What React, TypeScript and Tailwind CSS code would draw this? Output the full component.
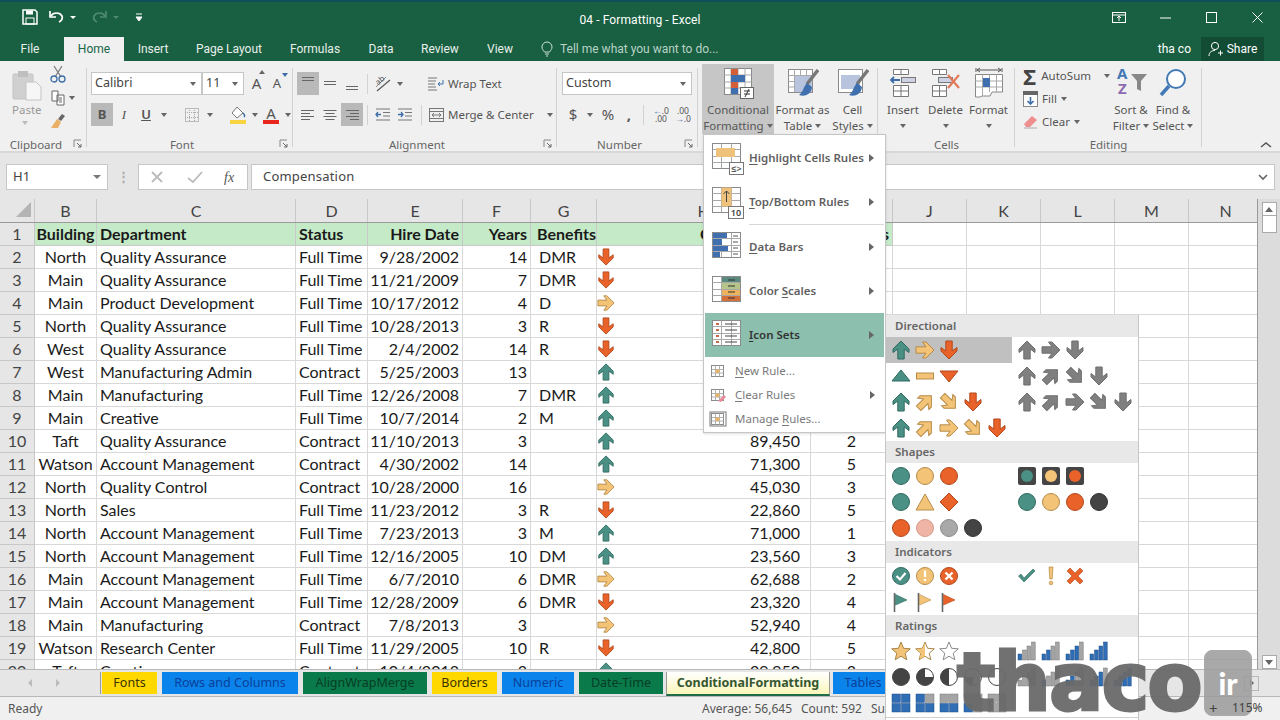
import { ReactNode } from 'react'

const TEAL = ['#4b9085', '#2f6a60']
const AMBER = ['#f3c477', '#b68b4a']
const ORANGE = ['#e8622a', '#b2481c']
const GRAY = ['#808080', '#6f6f6f']

const Arrow = ({ dir, c, size = 20 }: { dir: number; c: string[]; size?: number }) => (
  <svg width={size} height={size} viewBox="0 0 20 20">
    <path
      transform={`rotate(${dir} 10 10)`}
      d="M10 1 L18 9 L18 12.5 L13.2 9 L13.2 19 L6.8 19 L6.8 9 L2 12.5 L2 9Z"
      fill={c[0]}
      stroke={c[1]}
      strokeWidth="1"
    />
  </svg>
)

const Shape = ({ children }: { children: ReactNode }) => (
  <svg width="20" height="20" viewBox="0 0 20 20">
    {children}
  </svg>
)

const Dot = ({ c }: { c: string[] }) => (
  <Shape>
    <circle cx="10" cy="10" r="8.5" fill={c[0]} stroke={c[1]} />
  </Shape>
)

const Traffic = ({ c }: { c: string[] }) => (
  <Shape>
    <rect x="1" y="1" width="18" height="18" rx="2" fill="#454545" />
    <circle cx="10" cy="10" r="6" fill={c[0]} />
  </Shape>
)

const Flag = ({ c }: { c: string[] }) => (
  <Shape>
    <path d="M3.5 1V20" stroke="#666" strokeWidth="1.6" />
    <path d="M4.5 2.5L16 8L4.5 13Z" fill={c[0]} stroke={c[1]} strokeWidth="0.6" />
  </Shape>
)

const Star = ({ fill }: { fill: 'full' | 'half' | 'none' }) => (
  <Shape>
    <path
      d="M10 1L12.6 7.3L19.3 7.8L14.2 12.2L15.8 18.8L10 15.2L4.2 18.8L5.8 12.2L0.7 7.8L7.4 7.3Z"
      fill={fill === 'full' ? '#f3c477' : '#fff'}
      stroke={fill === 'none' ? '#8a8a8a' : '#a88547'}
    />
    {fill === 'half' && <path d="M10 1.8V15.2L4.5 18.3L6 12.2L1.3 7.9L7.6 7.5Z" fill="#f3c477" />}
  </Shape>
)

const Bars = ({ on }: { on: number }) => (
  <Shape>
    {[0, 1, 2, 3].map((i) => (
      <rect
        key={i}
        x={1 + i * 4.5}
        y={13 - i * 4}
        width="3.7"
        height={6 + i * 4}
        fill={i < on ? '#2f6db5' : '#a5a5a5'}
        stroke={i < on ? '#1f4f87' : '#777'}
        strokeWidth="0.5"
      />
    ))}
  </Shape>
)

const Pie = ({ d }: { d: string }) => (
  <Shape>
    <circle cx="10" cy="10" r="8.5" fill={d === 'M0' ? '#444' : '#fff'} stroke="#444" />
    {d !== 'M0' && <path d={d} fill="#444" />}
  </Shape>
)

const Quad = ({ on }: { on: boolean[] }) => (
  <Shape>
    {[
      [1, 1],
      [10.5, 1],
      [1, 10.5],
      [10.5, 10.5],
    ].map(([x, y], i) => (
      <rect key={i} x={x} y={y} width="8.5" height="8.5" fill={on[i] ? '#2f6db5' : '#a5a5a5'} stroke={on[i] ? '#1f4f87' : '#777'} strokeWidth="0.5" />
    ))}
  </Shape>
)

const IconRow = ({ items, hover }: { items: ReactNode[]; hover?: boolean }) => (
  <div className={`flex items-center pl-[3px] h-full ${hover ? 'bg-[#c0c0c0]' : ''}`}>
    {items.map((it, i) => (
      <span key={i} className="w-[24px] flex justify-center">
        {it}
      </span>
    ))}
  </div>
)

const SetRow = ({ left, right = [], hover, h = 'h-[26px]' }: { left: ReactNode[]; right?: ReactNode[]; hover?: boolean; h?: string }) => (
  <div className={`grid grid-cols-[126px_1fr] ${h}`}>
    <IconRow items={left} hover={hover} />
    <IconRow items={right} />
  </div>
)

const SetHeader = ({ label }: { label: string }) => (
  <div className="h-[22px] bg-[#e8e8e8] pl-[9px] flex items-center text-[11.5px] font-semibold text-[#666]">{label}</div>
)

const IconSetsMenu = () => (
  <div className="absolute left-[885px] top-[315px] w-[254px] h-[405px] bg-white border-l border-r border-[#c6c6c6] overflow-hidden z-20">
    <SetHeader label="Directional" />
    <SetRow
      hover
      left={[<Arrow dir={0} c={TEAL} />, <Arrow dir={90} c={AMBER} />, <Arrow dir={180} c={ORANGE} />]}
      right={[<Arrow dir={0} c={GRAY} />, <Arrow dir={90} c={GRAY} />, <Arrow dir={180} c={GRAY} />]}
    />
    <SetRow
      left={[
        <Shape><path d="M10 4L19 15H1Z" fill={TEAL[0]} stroke={TEAL[1]} /></Shape>,
        <Shape><rect x="1.5" y="7" width="17" height="6" fill={AMBER[0]} stroke={AMBER[1]} /></Shape>,
        <Shape><path d="M1 5H19L10 16Z" fill={ORANGE[0]} stroke={ORANGE[1]} /></Shape>,
      ]}
      right={[<Arrow dir={0} c={GRAY} />, <Arrow dir={45} c={GRAY} />, <Arrow dir={135} c={GRAY} />, <Arrow dir={180} c={GRAY} />]}
    />
    <SetRow
      left={[<Arrow dir={0} c={TEAL} />, <Arrow dir={45} c={AMBER} />, <Arrow dir={135} c={AMBER} />, <Arrow dir={180} c={ORANGE} />]}
      right={[<Arrow dir={0} c={GRAY} />, <Arrow dir={45} c={GRAY} />, <Arrow dir={90} c={GRAY} />, <Arrow dir={135} c={GRAY} />, <Arrow dir={180} c={GRAY} />]}
    />
    <SetRow left={[<Arrow dir={0} c={TEAL} />, <Arrow dir={45} c={AMBER} />, <Arrow dir={90} c={AMBER} />, <Arrow dir={135} c={AMBER} />, <Arrow dir={180} c={ORANGE} />]} />

    <SetHeader label="Shapes" />
    <SetRow
      left={[<Dot c={TEAL} />, <Dot c={AMBER} />, <Dot c={ORANGE} />]}
      right={[<Traffic c={TEAL} />, <Traffic c={AMBER} />, <Traffic c={ORANGE} />]}
    />
    <SetRow
      left={[
        <Dot c={TEAL} />,
        <Shape><path d="M10 2L19 18H1Z" fill={AMBER[0]} stroke={AMBER[1]} /></Shape>,
        <Shape><path d="M10 1L19 10L10 19L1 10Z" fill={ORANGE[0]} stroke={ORANGE[1]} /></Shape>,
      ]}
      right={[<Dot c={TEAL} />, <Dot c={AMBER} />, <Dot c={ORANGE} />, <Dot c={['#444', '#333']} />]}
    />
    <SetRow left={[<Dot c={ORANGE} />, <Dot c={['#efb4a4', '#d59a8a']} />, <Dot c={['#a8a8a8', '#8a8a8a']} />, <Dot c={['#444', '#333']} />]} />

    <SetHeader label="Indicators" />
    <SetRow
      left={[
        <Shape>
          <circle cx="10" cy="10" r="8.5" fill={TEAL[0]} stroke={TEAL[1]} />
          <path d="M5.5 10L9 13.5L14.5 7" stroke="#fff" strokeWidth="2.2" fill="none" />
        </Shape>,
        <Shape>
          <circle cx="10" cy="10" r="8.5" fill={AMBER[0]} stroke={AMBER[1]} />
          <path d="M10 4.5V11M10 13V15" stroke="#fff" strokeWidth="2.2" />
        </Shape>,
        <Shape>
          <circle cx="10" cy="10" r="8.5" fill={ORANGE[0]} stroke={ORANGE[1]} />
          <path d="M6.5 6.5L13.5 13.5M13.5 6.5L6.5 13.5" stroke="#fff" strokeWidth="2.4" />
        </Shape>,
      ]}
      right={[
        <Shape><path d="M1.5 10L7 16L18 5L16 3L7 12L4 8Z" fill={TEAL[0]} stroke={TEAL[1]} strokeWidth="0.6" /></Shape>,
        <Shape><path d="M8 1H12L11.2 13H8.8Z" fill={AMBER[0]} stroke={AMBER[1]} strokeWidth="0.7" /><circle cx="10" cy="17" r="1.8" fill={AMBER[0]} stroke={AMBER[1]} strokeWidth="0.7" /></Shape>,
        <Shape><path d="M5 2L10 7L15 2L18 5L13 10L18 15L15 18L10 13L5 18L2 15L7 10L2 5Z" fill={ORANGE[0]} stroke={ORANGE[1]} strokeWidth="0.6" /></Shape>,
      ]}
    />
    <SetRow h="h-[25px]" left={[<Flag c={TEAL} />, <Flag c={AMBER} />, <Flag c={ORANGE} />]} />
    <div className="pt-[1px]">
      <SetHeader label="Ratings" />
    </div>
    <SetRow
      h="h-[26px] mt-px"
      left={[<Star fill="full" />, <Star fill="half" />, <Star fill="none" />]}
      right={[<Bars on={1} />, <Bars on={2} />, <Bars on={3} />, <Bars on={4} />]}
    />
    <SetRow
      left={[
        <Pie d="M0" />,
        <Pie d="M10 10V1.5A8.5 8.5 0 1 0 18.5 10Z" />,
        <Pie d="M10 1.5A8.5 8.5 0 0 0 10 18.5Z" />,
        <Pie d="M10 10H1.5A8.5 8.5 0 0 0 10 18.5Z" />,
        <Pie d="M10 10" />,
      ]}
      right={[<Bars on={0} />, <Bars on={1} />, <Bars on={2} />, <Bars on={3} />, <Bars on={4} />]}
    />
    <SetRow
      left={[
        <Quad on={[true, true, true, true]} />,
        <Quad on={[true, false, true, true]} />,
        <Quad on={[false, false, true, true]} />,
        <Quad on={[false, false, true, false]} />,
        <Quad on={[false, false, false, false]} />,
      ]}
    />
    <div className="border-t border-[#d0d0d0] mt-[1px]" />
  </div>
)

const MiniGrid = ({ children }: { children?: ReactNode }) => (
  <svg width="40" height="36" viewBox="0 0 40 36">
    <rect x="6.5" y="3.5" width="28" height="25" fill="#fff" stroke="#8a8a8a" />
    <path d="M15.5 3.5V28.5M25.5 3.5V28.5M6.5 9.5H34.5M6.5 16.5H34.5M6.5 22.5H34.5" stroke="#a8a8a8" />
    {children}
  </svg>
)

const SmallGrid = ({ extra }: { extra?: ReactNode }) => (
  <svg width="18" height="18" viewBox="0 0 18 18">
    <rect x="2.5" y="3.5" width="12" height="11" fill="#fff" stroke="#8a8a8a" />
    <path d="M6.5 3.5V14.5M10.5 3.5V14.5M2.5 7.5H14.5M2.5 11H14.5" stroke="#b0b0b0" />
    <rect x="6.5" y="7.5" width="4" height="3.5" fill="#e4b56b" />
    {extra}
  </svg>
)

const U = ({ children }: { children: ReactNode }) => <span className="underline underline-offset-2">{children}</span>

const MenuItem = ({ icon, children, active }: { icon: ReactNode; children: ReactNode; active?: boolean }) => (
  <div className={`h-[44px] mx-px flex items-center pl-px pr-[10px] text-[11.5px] font-semibold whitespace-nowrap ${active ? 'bg-[#8cbfae] text-[#333]' : 'text-[#5f5f5f]'}`}>
    <span className="w-[43px] shrink-0">{icon}</span>
    <span className="flex-1 pb-px">{children}</span>
    <span className="border-l-[5px] border-y-[4px] border-y-transparent border-l-[#666]" />
  </div>
)

const SmallItem = ({ icon, children, arrow }: { icon: ReactNode; children: ReactNode; arrow?: boolean }) => (
  <div className="h-[24px] flex items-center pl-[5px] pr-[10px] text-[11.5px] text-[#7a7a7a]">
    <span className="w-[26px]">{icon}</span>
    <span className="flex-1">{children}</span>
    {arrow && <span className="border-l-[5px] border-y-[4px] border-y-transparent border-l-[#666]" />}
  </div>
)

const CondMenu = () => (
  <div className="absolute left-[703px] top-[134px] w-[183px] h-[299px] bg-white border border-[#c6c6c6] shadow-sm z-10 pt-px">
    <MenuItem
      icon={
        <MiniGrid>
          <rect x="10" y="8" width="19" height="9" fill="#eec27a" />
          <rect x="23.5" y="22.5" width="14" height="12" fill="#fff" stroke="#777" />
          <text x="30.5" y="32" fontSize="9" textAnchor="middle" fill="#555">≤&gt;</text>
        </MiniGrid>
      }
    >
      <U>H</U>ighlight Cells Rules
    </MenuItem>
    <MenuItem
      icon={
        <MiniGrid>
          <rect x="15.5" y="3.5" width="10" height="19" fill="#eec27a" />
          <path d="M20.5 18V7M17.5 10L20.5 7L23.5 10" stroke="#444" fill="none" />
          <rect x="22.5" y="22.5" width="15" height="12" fill="#fff" stroke="#777" />
          <text x="30" y="32" fontSize="9" textAnchor="middle" fill="#444">10</text>
        </MiniGrid>
      }
    >
      <U>T</U>op/Bottom Rules
    </MenuItem>
    <div className="ml-[45px] border-t border-[#d8d8d8] mr-px" />
    <MenuItem
      icon={
        <MiniGrid>
          <rect x="7" y="4" width="14" height="5" fill="#3f6fae" />
          <rect x="7" y="10" width="9" height="6" fill="#3f6fae" />
          <rect x="7" y="17" width="15" height="5" fill="#3f6fae" />
          <rect x="7" y="23" width="7" height="5" fill="#3f6fae" />
          <path d="M27 7H32M27 13H32M27 19H32M27 25H32" stroke="#555" />
        </MiniGrid>
      }
    >
      <U>D</U>ata Bars
    </MenuItem>
    <MenuItem
      icon={
        <MiniGrid>
          <rect x="16" y="4" width="18" height="5" fill="#5a8a7e" />
          <rect x="16" y="10" width="18" height="6" fill="#b4c48a" />
          <rect x="16" y="17" width="18" height="5" fill="#eeb25c" />
          <rect x="16" y="23" width="18" height="5" fill="#d4703a" />
          <path d="M22 7H29M22 13H29M22 19H29M22 25H29" stroke="#333" />
        </MiniGrid>
      }
    >
      Color <U>S</U>cales
    </MenuItem>
    <MenuItem
      active
      icon={
        <MiniGrid>
          <path d="M10 7H13M10 13H13M10 19H13M10 25H13" stroke="#c8664a" strokeWidth="2" />
          <path d="M19 7H31M19 13H31M19 19H31M19 25H31" stroke="#444" />
        </MiniGrid>
      }
    >
      <U>I</U>con Sets
    </MenuItem>
    <div className="pt-[2px]">
      <SmallItem icon={<SmallGrid />}>
        <U>N</U>ew Rule...
      </SmallItem>
      <SmallItem arrow icon={<SmallGrid extra={<path d="M9 15L15 9L17 11L12 16Z" fill="#e88a9a" />} />}>
        <U>C</U>lear Rules
      </SmallItem>
      <SmallItem icon={<SmallGrid extra={<rect x="1" y="2" width="16" height="14" fill="none" stroke="#777" />} />}>
        Manage <U>R</U>ules...
      </SmallItem>
    </div>
  </div>
)

const WIDTHS = ['w-[62px]', 'w-[199px]', 'w-[72px]', 'w-[95px]', 'w-[68px]', 'w-[66px]', 'w-[214px]', 'w-[82px]', 'w-[74px]', 'w-[74px]', 'w-[74px]', 'w-[74px]', 'w-[74px]']
const LETTERS = ['B', 'C', 'D', 'E', 'F', 'G', 'H', 'I', 'J', 'K', 'L', 'M', 'N']
const ALIGN = ['justify-center', 'pl-[3px]', 'pl-[3px]', 'justify-end pr-[3px]', 'justify-end pr-[3px]', 'pl-[8px]', 'justify-end pr-[10px]', 'justify-center', '', '', '', '', '']
const HEAD_ALIGN = ['justify-center', 'pl-[3px]', 'pl-[3px]', 'justify-end pr-[3px]', 'justify-end pr-[3px]', 'pl-[6px]', 'pl-[103px]', 'justify-end pr-[3px]']

type Flow = 'up' | 'down' | 'right'
const ROWS: [string, string, string, string, string, string, Flow, string, string][] = [
  ['North', 'Quality Assurance', 'Full Time', '9/28/2002', '14', 'DMR', 'down', '', ''],
  ['Main', 'Quality Assurance', 'Full Time', '11/21/2009', '7', 'DMR', 'down', '', ''],
  ['Main', 'Product Development', 'Full Time', '10/17/2012', '4', 'D', 'right', '', ''],
  ['North', 'Quality Assurance', 'Full Time', '10/28/2013', '3', 'R', 'down', '', ''],
  ['West', 'Quality Assurance', 'Full Time', '2/4/2002', '14', 'R', 'down', '', ''],
  ['West', 'Manufacturing Admin', 'Contract', '5/25/2003', '13', '', 'up', '', ''],
  ['Main', 'Manufacturing', 'Full Time', '12/26/2008', '7', 'DMR', 'up', '', ''],
  ['Main', 'Creative', 'Full Time', '10/7/2014', '2', 'M', 'up', '', ''],
  ['Taft', 'Quality Assurance', 'Contract', '11/10/2013', '3', '', 'up', '89,450', '2'],
  ['Watson', 'Account Management', 'Contract', '4/30/2002', '14', '', 'up', '71,300', '5'],
  ['North', 'Quality Control', 'Contract', '10/28/2000', '16', '', 'right', '45,030', '3'],
  ['North', 'Sales', 'Full Time', '11/23/2012', '3', 'R', 'down', '22,860', '5'],
  ['North', 'Account Management', 'Full Time', '7/23/2013', '3', 'M', 'up', '71,000', '1'],
  ['North', 'Account Management', 'Full Time', '12/16/2005', '10', 'DM', 'up', '23,560', '3'],
  ['Main', 'Account Management', 'Full Time', '6/7/2010', '6', 'DMR', 'right', '62,688', '2'],
  ['Main', 'Account Management', 'Full Time', '12/28/2009', '6', 'DMR', 'down', '23,320', '4'],
  ['Main', 'Manufacturing', 'Contract', '7/8/2013', '3', '', 'right', '52,940', '4'],
  ['Watson', 'Research Center', 'Full Time', '11/29/2005', '10', 'R', 'down', '42,800', '5'],
  ['Taft', 'Creative', 'Contract', '10/4/2013', '3', '', 'up', '29,950', '3'],
]

const FlowIcon = ({ f }: { f: Flow }) => (
  <span className="absolute left-0 top-[2px]">
    {f === 'up' && <Arrow dir={0} c={TEAL} size={18} />}
    {f === 'down' && <Arrow dir={180} c={ORANGE} size={18} />}
    {f === 'right' && <Arrow dir={90} c={AMBER} size={18} />}
  </span>
)

const RowHead = ({ n }: { n: number }) => (
  <div className="w-[35px] shrink-0 bg-[#e6e6e6] border-r border-b border-[#c8c8c8] flex items-center justify-center text-[#444]">{n}</div>
)

const Sheet = () => (
  <div className="flex h-[470px] shrink-0">
    <div className="w-[1258px] overflow-hidden border-r border-[#9a9a9a] font-['Lato',sans-serif] text-[16px] text-[#1a1a1a] bg-white">
      <div className="flex h-[24px] bg-[#e6e6e6] border-b border-[#9a9a9a] text-[#444] w-[1300px]">
        <div className="w-[35px] shrink-0 border-r border-[#c8c8c8] pl-[16px] pt-[3px]">
          <div className="w-0 h-0 border-l-[15px] border-b-[15px] border-l-transparent border-b-[#b4b4b4]" />
        </div>
        {LETTERS.map((l, i) => (
          <div key={l} className={`${WIDTHS[i]} shrink-0 border-r border-[#c8c8c8] flex items-center justify-center`}>
            {l}
          </div>
        ))}
      </div>
      <div className="flex h-[23px] w-[1300px]">
        <RowHead n={1} />
        {['Building', 'Department', 'Status', 'Hire Date', 'Years', 'Benefits', 'Compensation', 'Ratings'].map((t, i) => (
          <div key={t} className={`${WIDTHS[i]} shrink-0 flex items-center font-bold bg-[#c5eac8] border-b border-r border-[#c8c8c8] whitespace-nowrap ${HEAD_ALIGN[i]}`}>
            {t}
          </div>
        ))}
        {WIDTHS.slice(8).map((w, i) => (
          <div key={i} className={`${w} shrink-0 border-b border-r border-[#d8d8d8]`} />
        ))}
      </div>
      {ROWS.map((r, idx) => (
        <div key={idx} className="flex h-[23px] w-[1300px]">
          <RowHead n={idx + 2} />
          {WIDTHS.map((w, i) => {
            const text = i < 6 ? r[i] : i === 6 ? r[7] : i === 7 ? r[8] : ''
            return (
              <div key={i} className={`${w} shrink-0 relative flex items-center border-b border-r border-[#d8d8d8] ${ALIGN[i]}`}>
                {i === 6 && <FlowIcon f={r[6]} />}
                {text}
              </div>
            )
          })}
        </div>
      ))}
    </div>
    <div className="w-[22px] bg-[#dcdcdc] flex flex-col items-center pt-[3px] pb-0">
      <div className="w-[15px] h-[14px] bg-white border border-[#aaa] flex items-center justify-center">
        <span className="border-b-[5px] border-x-[4px] border-x-transparent border-b-[#666]" />
      </div>
      <div className="w-[15px] h-[17px] bg-white border border-[#aaa] border-t-0" />
      <div className="flex-1" />
      <div className="w-[15px] h-[14px] bg-white border border-[#aaa] flex items-center justify-center">
        <span className="border-t-[5px] border-x-[4px] border-x-transparent border-t-[#666]" />
      </div>
    </div>
  </div>
)

const Tab = ({ w, bg, text, children }: { w: string; bg: string; text: string; children: ReactNode }) => (
  <div className={`${w} ${bg} ${text} h-[22px] shrink-0 flex items-center justify-center`}>{children}</div>
)

const SheetTabs = () => (
  <div className="h-[28px] shrink-0 bg-[#e6e6e6] border-t border-b border-[#b8b8b8] flex items-center text-[12.5px]">
    <div className="w-[101px] h-[22px] flex items-center border-r border-[#999] shrink-0">
      <span className="ml-[28px] border-r-[4px] border-y-[4px] border-y-transparent border-r-[#bbb]" />
      <span className="ml-[24px] border-l-[4px] border-y-[4px] border-y-transparent border-l-[#bbb]" />
    </div>
    <div className="flex gap-[5px] items-start h-full pt-[2px] pl-px">
      <Tab w="w-[55px]" bg="bg-[#ffd800]" text="text-[#3a3200]">Fonts</Tab>
      <Tab w="w-[136px]" bg="bg-[#0a84ea]" text="text-[#0b3f9a]">Rows and Columns</Tab>
      <Tab w="w-[124px]" bg="bg-[#0b7a4b]" text="text-[#053d25]">AlignWrapMerge</Tab>
      <Tab w="w-[65px]" bg="bg-[#ffd800]" text="text-[#3a3200]">Borders</Tab>
      <Tab w="w-[72px]" bg="bg-[#0a84ea]" text="text-[#0b3f9a]">Numeric</Tab>
      <Tab w="w-[84px]" bg="bg-[#0b7a4b]" text="text-[#053d25]">Date-Time</Tab>
      <div className="-mx-[2px] w-[164px] h-[24px] shrink-0 bg-gradient-to-b from-white to-[#fbf6b8] border-b-2 border-[#1e6b4a] border-x border-x-[#9a9a9a] flex items-center justify-center font-bold text-[#35572f]">
        ConditionalFormatting
      </div>
      <Tab w="w-[60px]" bg="bg-[#0a84ea]" text="text-[#0b3f9a]">Tables</Tab>
    </div>
    <div className="flex-1" />
    <div className="w-[15px] h-[15px] mr-[21px] bg-[#e6e6e6] border border-[#b8b8b8] flex items-center justify-center">
      <span className="border-l-[4px] border-y-[4px] border-y-transparent border-l-[#666]" />
    </div>
  </div>
)

const StatusBar = () => (
  <div className="h-[23px] shrink-0 bg-[#f0f0f0] flex items-center pl-[8px] text-[12px] text-[#555]">
    <span className="w-[694px]">Ready</span>
    <span className="w-[99px]">Average: 56,645</span>
    <span className="w-[70px]">Count: 592</span>
    <span>Sum:</span>
  </div>
)

const Caret = ({ className = '' }: { className?: string }) => (
  <span className={`inline-block border-t-[4px] border-x-[3px] border-x-transparent border-t-[#666] ${className}`} />
)

const Lines = ({ widths, align = 'left', top = 3 }: { widths: number[]; align?: 'left' | 'center' | 'right'; top?: number }) => (
  <svg width="16" height="16" viewBox="0 0 16 16">
    {widths.map((w, i) => {
      const x = align === 'left' ? 1 : align === 'right' ? 15 - w : 8 - w / 2
      return <rect key={i} x={x} y={top + i * 3} width={w} height="1" fill="#666" />
    })}
  </svg>
)

const Btn = ({ w, active, children }: { w: string; active?: boolean; children: ReactNode }) => (
  <div className={`${w} h-[23px] flex items-center justify-center shrink-0 ${active ? 'bg-[#b9b9b9]' : ''}`}>{children}</div>
)

const Combo = ({ w, label }: { w: string; label: string }) => (
  <div className={`${w} h-[23px] bg-white border border-[#c6c6c6] flex items-center px-[3px] text-[12.5px] text-[#444]`}>
    <span className="flex-1">{label}</span>
    <Caret className="mr-[2px]" />
  </div>
)

const Launcher = () => (
  <svg width="10" height="10" viewBox="0 0 10 10" className="shrink-0">
    <path d="M1 8V1H8" stroke="#888" fill="none" />
    <path d="M4 4L8 8M8 5V8H5" stroke="#666" fill="none" />
  </svg>
)

const Group = ({ w, label, launcher, children }: { w: string; label?: string; launcher?: boolean; children: ReactNode }) => (
  <div className={`${w} shrink-0 h-full flex flex-col relative after:absolute after:right-0 after:top-[4px] after:bottom-[4px] after:w-px after:bg-[#d2d2d2]`}>
    <div className="flex-1 min-h-0">{children}</div>
    <div className={`h-[20px] pt-[7px] flex items-center justify-center text-[11.5px] text-[#666] relative ${launcher ? 'pr-[16px]' : ''}`}>
      {label}
      {launcher && (
        <span className="absolute right-[4px] top-[8px]">
          <Launcher />
        </span>
      )}
    </div>
  </div>
)

const Big = ({ w, icon, lines, active }: { w: string; icon: ReactNode; lines: string[]; active?: boolean }) => (
  <div className={`${w} h-[70px] shrink-0 flex flex-col items-center text-[11.5px] leading-[16px] text-[#555] ${active ? 'bg-[#c6c6c6]' : ''}`}>
    <div className="h-[38px] flex items-center justify-center">{icon}</div>
    <div className="text-center whitespace-nowrap">{lines[0]}</div>
    <div className="text-center whitespace-nowrap flex items-center justify-center gap-[3px] h-[16px]">
      {lines[1]}
      <Caret />
    </div>
  </div>
)

const Ribbon = () => (
  <div className="h-[92px] shrink-0 bg-[#f0f0f0] flex pl-px pt-[3px] border-b-2 border-b-[#d8d8d8]">
    <Group w="w-[86px]" label="Clipboard" launcher>
      <div className="flex">
        <div className="w-[49px] pl-[11px] pt-[5px] flex flex-col items-start text-[11.5px] leading-[16px] text-[#999]">
          <svg width="30" height="32" viewBox="0 0 30 32">
            <rect x="1" y="5" width="20" height="25" rx="1" fill="#d0d0d0" stroke="#c4c4c4" />
            <rect x="6" y="2" width="10" height="6" fill="#bfbfbf" />
            <path d="M14 13H24L29 18V31H14Z" fill="#f6f6f6" stroke="#c4c4c4" />
          </svg>
          <span className="pt-[1px]">Paste</span>
          <Caret className="ml-[10px] mt-[3px] border-t-[#bbb]" />
        </div>
        <div className="flex flex-col pt-px gap-[7px]">
          <svg width="16" height="18" viewBox="0 0 16 18">
            <path d="M4 1L11 12M12 1L5 12" stroke="#777" strokeWidth="1.2" />
            <circle cx="4" cy="14" r="3" fill="none" stroke="#3d6ea8" strokeWidth="1.3" />
            <circle cx="12" cy="14" r="3" fill="none" stroke="#3d6ea8" strokeWidth="1.3" />
          </svg>
          <div className="flex items-center gap-[3px]">
            <svg width="16" height="16" viewBox="0 0 16 16">
              <path d="M2 1H8V11H2ZM7 5H14V15H7Z" fill="#fff" stroke="#666" />
              <path d="M9 8H12M9 10H12M9 12H12" stroke="#666" />
            </svg>
            <Caret />
          </div>
          <svg width="16" height="16" viewBox="0 0 16 16">
            <path d="M1 15L7 6L11 9L8 15Z" fill="#e9b066" />
            <path d="M8 6L12 1L15 3L11 8Z" fill="#666" />
          </svg>
        </div>
      </div>
    </Group>

    <Group w="w-[206px]" label="Font" launcher>
      <div className="pl-[4px] pt-[8px] flex flex-col gap-[8px]">
        <div className="flex items-center">
          <Combo w="w-[111px]" label="Calibri" />
          <Combo w="w-[42px]" label="11" />
          <span className="w-[22px] text-center text-[#555] text-[15px] pl-[3px] relative">A<span className="absolute right-[1px] -top-[2px] border-b-[4px] border-x-[3px] border-x-transparent border-b-[#666]" /></span>
          <span className="w-[22px] text-center text-[#555] text-[13px] relative">A<span className="absolute right-0 -top-[1px] border-t-[4px] border-x-[3px] border-x-transparent border-t-[#3d6ea8]" /></span>
        </div>
        <div className="flex items-center text-[#555] text-[13px]">
          <Btn w="w-[22px]" active><b>B</b></Btn>
          <Btn w="w-[22px]"><i className="font-['Liberation_Serif',serif]">I</i></Btn>
          <Btn w="w-[22px]"><u className="font-semibold">U</u></Btn>
          <Btn w="w-[14px]"><Caret /></Btn>
          <div className="w-px h-[20px] bg-[#d2d2d2] mx-[5px]" />
          <Btn w="w-[22px]">
            <svg width="14" height="14" viewBox="0 0 14 14">
              <rect x="0.5" y="0.5" width="13" height="13" fill="none" stroke="#888" strokeDasharray="1 1" />
              <path d="M0 4.5H14M0 9.5H14M4.5 0V14M9.5 0V14" stroke="#aaa" strokeDasharray="1 1" />
            </svg>
          </Btn>
          <Btn w="w-[14px]"><Caret /></Btn>
          <div className="w-px h-[20px] bg-[#d2d2d2] mx-[5px]" />
          <Btn w="w-[22px]">
            <svg width="18" height="18" viewBox="0 0 18 18">
              <path d="M8 1L14 7L8 12L3 7Z" fill="#fff" stroke="#777" />
              <path d="M14 7C16 9 16 10 15 11" stroke="#3d6ea8" strokeWidth="1.5" fill="none" />
              <rect x="1" y="14" width="16" height="4" fill="#f7d440" />
            </svg>
          </Btn>
          <Btn w="w-[12px]"><Caret /></Btn>
          <Btn w="w-[20px]">
            <span className="relative text-[15px] text-[#555] leading-none pb-[3px]">
              A
              <span className="absolute -left-[3px] -right-[3px] bottom-0 h-[4px] bg-[#e8261c]" />
            </span>
          </Btn>
          <Btn w="w-[14px]"><Caret /></Btn>
        </div>
      </div>
    </Group>

    <Group w="w-[264px]" label="Alignment" launcher>
      <div className="pl-[4px] pt-[8px] flex flex-col gap-[8px]">
        <div className="flex items-center h-[23px]">
          <Btn w="w-[22px]" active><Lines widths={[12, 12]} align="center" top={1} /></Btn>
          <Btn w="w-[22px]"><Lines widths={[12, 12]} align="center" top={5} /></Btn>
          <Btn w="w-[22px]"><Lines widths={[12, 12]} align="center" top={10} /></Btn>
          <div className="w-px h-[20px] bg-[#d2d2d2] mx-[4px]" />
          <Btn w="w-[22px]">
            <svg width="18" height="18" viewBox="0 0 18 18">
              <path d="M2 12L12 2" stroke="#888" />
              <path d="M3 16L16 5" stroke="#555" strokeWidth="1.2" />
              <text x="2" y="9" fontSize="8" fill="#555" transform="rotate(-40 5 7)">ab</text>
            </svg>
          </Btn>
          <Btn w="w-[12px]"><Caret /></Btn>
          <div className="w-[21px]" />
          <div className="flex items-center gap-[4px] text-[11.5px] text-[#555]">
            <svg width="17" height="16" viewBox="0 0 17 16">
              <path d="M1 2H10M1 5H9M1 8H8M1 11H9M1 14H10" stroke="#777" />
              <path d="M16 4V8H11M13 6L11 8L13 10" stroke="#3d6ea8" fill="none" />
            </svg>
            Wrap Text
          </div>
        </div>
        <div className="flex items-center h-[23px]">
          <Btn w="w-[22px]"><Lines widths={[13, 9, 13, 9]} /></Btn>
          <Btn w="w-[22px]"><Lines widths={[13, 9, 13, 9]} align="center" /></Btn>
          <Btn w="w-[22px]" active><Lines widths={[13, 9, 13, 9]} align="right" /></Btn>
          <div className="w-px h-[20px] bg-[#d2d2d2] mx-[4px]" />
          <Btn w="w-[22px]">
            <svg width="16" height="14" viewBox="0 0 16 14">
              <path d="M1 1H15M8 4.5H15M8 8H15M1 12H15" stroke="#777" />
              <path d="M6 6.5H1M3 4L1 6.5L3 9" stroke="#3d6ea8" fill="none" strokeWidth="1.3" />
            </svg>
          </Btn>
          <Btn w="w-[22px]">
            <svg width="16" height="14" viewBox="0 0 16 14">
              <path d="M1 1H15M8 4.5H15M8 8H15M1 12H15" stroke="#777" />
              <path d="M1 6.5H6M4 4L6 6.5L4 9" stroke="#3d6ea8" fill="none" strokeWidth="1.3" />
            </svg>
          </Btn>
          <div className="w-px h-[20px] bg-[#d2d2d2] ml-[5px] mr-[7px]" />
          <div className="flex items-center gap-[4px] text-[11.5px] text-[#555]">
            <svg width="15" height="14" viewBox="0 0 15 14">
              <rect x="0.5" y="0.5" width="14" height="13" fill="none" stroke="#777" />
              <path d="M0 3.5H15M0 10.5H15M3 7H12M5 5L3 7L5 9M10 5L12 7L10 9" stroke="#777" fill="none" />
            </svg>
            Merge &amp; Center
            <Caret className="ml-[9px]" />
          </div>
        </div>
      </div>
    </Group>

    <Group w="w-[141px]" label="Number" launcher>
      <div className="pl-[5px] pt-[8px] flex flex-col gap-[8px]">
        <Combo w="w-[130px]" label="Custom" />
        <div className="flex items-center text-[#555] h-[23px]">
          <Btn w="w-[22px]"><span className="text-[15px]">$</span></Btn>
          <Btn w="w-[11px]"><Caret /></Btn>
          <Btn w="w-[26px]"><span className="text-[15px]">%</span></Btn>
          <Btn w="w-[16px]"><b className="text-[15px]">,</b></Btn>
          <div className="w-px h-[20px] bg-[#d2d2d2] mx-[6px]" />
          <Btn w="w-[22px]"><span className="text-[8.5px] leading-[8px] text-center"><span className="text-[#3d6ea8]">←</span>.0<br />.00</span></Btn>
          <Btn w="w-[22px]"><span className="text-[8.5px] leading-[8px] text-center">.00<br /><span className="text-[#3d6ea8]">→</span>.0</span></Btn>
        </div>
      </div>
    </Group>

    <Group w="w-[180px]" label="Styles">
      <div className="flex pl-[4px]">
        <Big
          w="w-[72px]"
          active
          lines={['Conditional', 'Formatting']}
          icon={
            <svg width="32" height="32" viewBox="0 0 32 32">
              <rect x="2.5" y="1.5" width="27" height="26" fill="#fff" stroke="#8a8a8a" />
              <path d="M9 1.5V27M16 1.5V27M23 1.5V27M2.5 8H29.5M2.5 15H29.5M2.5 21H29.5" stroke="#aaa" />
              <rect x="9" y="2" width="7" height="6" fill="#d4603a" />
              <rect x="9" y="8" width="14" height="7" fill="#3f6fae" />
              <rect x="9" y="15" width="7" height="6" fill="#d4603a" />
              <rect x="9" y="21" width="7" height="6" fill="#3f6fae" />
              <rect x="18.5" y="20.5" width="13" height="11" fill="#fff" stroke="#666" />
              <path d="M22 24H28M22 27H28M23 30L27 22" stroke="#333" />
            </svg>
          }
        />
        <Big
          w="w-[57px]"
          lines={['Format as', 'Table']}
          icon={
            <svg width="32" height="32" viewBox="0 0 32 32">
              <rect x="1.5" y="2.5" width="24" height="23" fill="#fff" stroke="#8a8a8a" />
              <path d="M7.5 2.5V25M13.5 2.5V25M19.5 2.5V25M1.5 8.5H25.5M1.5 14.5H25.5M1.5 20H25.5" stroke="#aaa" />
              <rect x="8" y="9" width="17" height="16" fill="#b8c4de" />
              <path d="M31 3L20 17" stroke="#777" strokeWidth="3.5" />
              <path d="M20 16C16 20 17 24 12 28C17 30 24 28 25 20Z" fill="#3f6fae" />
            </svg>
          }
        />
        <Big
          w="w-[43px]"
          lines={['Cell', 'Styles']}
          icon={
            <svg width="32" height="32" viewBox="0 0 32 32">
              <rect x="1.5" y="2.5" width="24" height="23" fill="#fff" stroke="#8a8a8a" />
              <rect x="4" y="8" width="19" height="14" fill="#b8c4de" />
              <path d="M31 3L20 17" stroke="#777" strokeWidth="3.5" />
              <path d="M20 16C16 20 17 24 12 28C17 30 24 28 25 20Z" fill="#3f6fae" />
            </svg>
          }
        />
      </div>
    </Group>

    <Group w="w-[137px]" label="Cells">
      <div className="flex pl-[3px]">
        <Big
          w="w-[44px]"
          lines={['Insert', '']}
          icon={
            <svg width="28" height="30" viewBox="0 0 28 30">
              <path d="M4.5 1.5H19.5V6.5H4.5ZM12 1.5V6.5M4.5 17.5H19.5V28.5H4.5ZM12 17.5V28.5M4.5 23H19.5" fill="#fff" stroke="#777" />
              <rect x="12.5" y="9.5" width="14" height="5" fill="#cdd2e4" stroke="#777" />
              <path d="M11 12H2M5 9L2 12L5 15" stroke="#3d6ea8" strokeWidth="1.8" fill="none" />
            </svg>
          }
        />
        <Big
          w="w-[41px]"
          lines={['Delete', '']}
          icon={
            <svg width="30" height="30" viewBox="0 0 30 30">
              <path d="M1.5 1.5H15.5V6.5H1.5ZM8.5 1.5V6.5M1.5 17.5H15.5V28.5H1.5ZM8.5 17.5V28.5M1.5 23H15.5" fill="#fff" stroke="#777" />
              <rect x="7.5" y="9.5" width="14" height="5" fill="#cdd2e4" stroke="#777" />
              <path d="M17 7L28 20M28 7L17 20" stroke="#e07a58" strokeWidth="2.2" />
            </svg>
          }
        />
        <Big
          w="w-[45px]"
          lines={['Format', '']}
          icon={
            <svg width="30" height="32" viewBox="0 0 30 32">
              <path d="M2 1V5M28 1V5M3 3H27M6 1L3 3L6 5M24 1L27 3L24 5" stroke="#555" fill="none" />
              <path d="M1.5 7.5H28.5V25L18 25L16 29H8L6 30H1.5Z" fill="#fff" stroke="#888" />
              <path d="M8.5 7.5V29M15.5 7.5V25M22.5 7.5V25M1.5 14H28.5M1.5 20H28.5" stroke="#aaa" />
              <rect x="9" y="11" width="7" height="9" fill="#3f6fae" />
            </svg>
          }
        />
      </div>
    </Group>

    <Group w="w-[187px]" label="Editing">
      <div className="flex">
        <div className="w-[95px] pl-[7px] pt-px flex flex-col gap-[2px] text-[11.5px] text-[#555]">
          <div className="flex items-center gap-[4px] h-[21px]">
            <span className="w-[16px] text-[22px] leading-none text-[#444] font-bold text-center">Σ</span>
            <span>AutoSum</span>
            <Caret className="ml-[9px]" />
          </div>
          <div className="flex items-center gap-[4px] h-[21px] pl-px">
            <svg width="15" height="16" viewBox="0 0 15 16">
              <rect x="0.5" y="0.5" width="14" height="15" fill="#fff" stroke="#888" />
              <rect x="0" y="0" width="15" height="4" fill="#666" />
              <path d="M7.5 6V13M4.5 10L7.5 13L10.5 10" stroke="#3d6ea8" strokeWidth="1.6" fill="none" />
            </svg>
            <span>Fill</span>
            <Caret />
          </div>
          <div className="flex items-center gap-[4px] h-[21px] pl-px">
            <svg width="15" height="15" viewBox="0 0 15 15">
              <path d="M1 10L9 2L14 6L7 13H3Z" fill="#ee8e8e" />
              <path d="M1 14H14" stroke="#aaa" />
            </svg>
            <span>Clear</span>
            <Caret />
          </div>
        </div>
        <Big
          w="w-[42px]"
          lines={['Sort &', 'Filter']}
          icon={
            <span className="relative w-[32px] h-[32px] block">
              <span className="absolute left-[2px] -top-[1px] text-[15px] font-bold leading-[15px] text-[#4178b5]">A</span>
              <span className="absolute left-[3px] top-[14px] text-[15px] font-bold leading-[15px] text-[#8e6bb0]">Z</span>
              <svg className="absolute right-0 top-[7px]" width="16" height="18" viewBox="0 0 16 18">
                <path d="M0 0H16L10 7V17L6 15V7Z" fill="#888" />
              </svg>
            </span>
          }
        />
        <Big
          w="w-[42px]"
          lines={['Find &', 'Select']}
          icon={
            <svg width="30" height="30" viewBox="0 0 30 30">
              <circle cx="18" cy="11" r="9" fill="#fff" stroke="#4178b5" strokeWidth="2" />
              <path d="M11 18L3 27" stroke="#4178b5" strokeWidth="3.5" />
            </svg>
          }
        />
      </div>
    </Group>

    <div className="flex-1 relative">
      <svg className="absolute right-[8px] bottom-[2px]" width="12" height="8" viewBox="0 0 12 8">
        <path d="M1 6L6 2L11 6" stroke="#555" strokeWidth="1.5" fill="none" />
      </svg>
    </div>
  </div>
)

const FormulaBar = () => (
  <div className="h-[46px] shrink-0 bg-[#e6e6e6] flex items-start pt-[11px] pl-[6px] text-[13px] text-[#444]">
    <div className="w-[102px] h-[26px] bg-white border border-[#c6c6c6] flex items-center pl-[6px] pr-[6px]">
      <span className="flex-1">H1</span>
      <span className="border-t-[4px] border-x-[4px] border-x-transparent border-t-[#777]" />
    </div>
    <div className="w-[30px] h-[26px] flex items-center justify-center text-[#aaa] font-bold tracking-tight">⋮</div>
    <div className="w-[110px] h-[26px] bg-white border border-[#c6c6c6] flex items-center pl-[11px] shrink-0">
      <svg width="14" height="14" viewBox="0 0 14 14"><path d="M2 2L12 12M12 2L2 12" stroke="#bbb" strokeWidth="1.8" /></svg>
      <svg className="ml-[23px]" width="16" height="14" viewBox="0 0 16 14"><path d="M1 8L6 12L15 2" stroke="#bbb" strokeWidth="1.8" fill="none" /></svg>
      <span className="ml-[21px] italic font-['Liberation_Serif',serif] text-[#555] text-[14px]">fx</span>
    </div>
    <div className="ml-[3px] w-[1024px] h-[26px] bg-white border border-[#c6c6c6] flex items-center pl-[11px] tracking-[0.2px]">
      <span className="flex-1">Compensation</span>
      <svg className="mr-[6px]" width="10" height="7" viewBox="0 0 10 7"><path d="M1 1L5 5L9 1" stroke="#666" strokeWidth="1.6" fill="none" /></svg>
    </div>
  </div>
)

const NavTab = ({ w, children }: { w: string; children: ReactNode }) => (
  <div className={`${w} h-full flex items-center justify-center text-[#fff] opacity-90`}>{children}</div>
)

const TitleArea = () => (
  <div className="shrink-0 bg-[#195f41] border-t-2 border-[#0f4f5c] text-[12px] text-white font-['Roboto',sans-serif]">
    <div className="h-[35px] grid grid-cols-[1fr_auto_1fr] items-center">
      <div className="flex items-center pl-[22px] gap-[11px] pb-[5px]">
        <svg width="16" height="16" viewBox="0 0 16 16">
          <path d="M1 1H13L15 3V15H1Z" fill="none" stroke="#fff" strokeWidth="1.5" />
          <rect x="4" y="1.5" width="7" height="4" fill="#fff" />
          <rect x="4" y="9" width="8" height="6" fill="none" stroke="#fff" />
        </svg>
        <svg width="15" height="14" viewBox="0 0 15 14">
          <path d="M2 6C4 2 11 2 13 6C14 9 12 11 10 12" fill="none" stroke="#fff" strokeWidth="1.7" />
          <path d="M1 1V7H7" fill="none" stroke="#fff" strokeWidth="1.7" />
        </svg>
        <span className="border-t-[3px] border-x-[3px] border-x-transparent border-t-white -ml-[5px]" />
        <svg className="ml-[5px]" width="15" height="14" viewBox="0 0 15 14">
          <path d="M13 6C11 2 4 2 2 6C1 9 3 11 5 12" fill="none" stroke="#4d8a70" strokeWidth="1.7" />
          <path d="M14 1V7H8" fill="none" stroke="#4d8a70" strokeWidth="1.7" />
        </svg>
        <span className="border-t-[3px] border-x-[3px] border-x-transparent border-t-[#4d8a70] -ml-[5px]" />
        <svg className="ml-[5px]" width="8" height="9" viewBox="0 0 8 9">
          <path d="M1 1H7M1 4L4 8L7 4Z" stroke="#fff" fill="#fff" />
        </svg>
      </div>
      <div className="tracking-[0.1px] pt-px">04 - Formatting - Excel</div>
      <div className="flex justify-end pb-[5px]">
        <span className="w-[46px] flex justify-center">
          <svg width="14" height="11" viewBox="0 0 14 11">
            <rect x="0.5" y="0.5" width="13" height="10" fill="none" stroke="#fff" />
            <path d="M0 3H14M7 9V4M5 6L7 4L9 6" stroke="#fff" fill="none" />
          </svg>
        </span>
        <span className="w-[46px] flex justify-center">
          <svg width="11" height="11" viewBox="0 0 11 11"><path d="M0 6H11" stroke="#fff" /></svg>
        </span>
        <span className="w-[46px] flex justify-center">
          <svg width="11" height="11" viewBox="0 0 11 11"><rect x="0.5" y="0.5" width="10" height="10" fill="none" stroke="#fff" /></svg>
        </span>
        <span className="w-[46px] flex justify-center">
          <svg width="11" height="11" viewBox="0 0 11 11"><path d="M0.5 0.5L10.5 10.5M10.5 0.5L0.5 10.5" stroke="#fff" /></svg>
        </span>
      </div>
    </div>
    <div className="h-[24px] flex items-stretch">
      <NavTab w="w-[64px] pr-[4px]">File</NavTab>
      <div className="w-[60px] bg-[#f0f0f0] text-[#19654a] flex items-center justify-center">Home</div>
      <NavTab w="w-[58px]">Insert</NavTab>
      <NavTab w="w-[94px]">Page Layout</NavTab>
      <NavTab w="w-[78px]">Formulas</NavTab>
      <NavTab w="w-[54px]">Data</NavTab>
      <NavTab w="w-[64px]">Review</NavTab>
      <NavTab w="w-[56px]">View</NavTab>
      <div className="pl-[13px] flex items-center gap-[7px] text-[#b8d3c6]">
        <svg width="12" height="16" viewBox="0 0 12 16">
          <path d="M3.5 11C2 9 1 8 1 6A5 5 0 0 1 11 6C11 8 10 9 8.5 11Z M4 13H8M5 15H7" fill="none" stroke="#cfe2d9" />
        </svg>
        Tell me what you want to do...
      </div>
      <div className="flex-1" />
      <div className="flex items-center mr-[10px]">tha co</div>
      <div className="w-[63px] mr-[16px] bg-[#124c34] flex items-center justify-center gap-[4px]">
        <svg width="15" height="16" viewBox="0 0 15 16">
          <circle cx="7" cy="5" r="3.6" fill="none" stroke="#fff" />
          <path d="M1 15C1 11 4 9.5 7 9.5M10 12H15M12.5 9.5V14.5" fill="none" stroke="#fff" />
        </svg>
        Share
      </div>
    </div>
  </div>
)

const Watermark = () => (
  <>
    <div className="absolute left-[1204px] top-[650px] w-[48px] h-[66px] z-20 rounded-lg bg-[#9a9a9a]/85 border border-[#aaa] flex items-center justify-center text-white font-black text-[30px] font-['Lato',sans-serif]">
      ir
    </div>
    <div className="absolute left-[1209px] top-[699px] z-30 flex items-center text-[12px] text-[#444]">
      <span className="text-[15px] leading-none w-[23px]">+</span>
      <span>115%</span>
    </div>
    <div className="absolute left-[957px] top-[638px] z-30 font-['DejaVu_Sans',sans-serif] font-bold text-[80px] leading-[90px] tracking-[-1.5px] text-[#6a6a6a] opacity-95 [-webkit-text-stroke:3px_#6a6a6a]">
      thaco
    </div>
  </>
)

export default function App() {
  return (
    <div className="relative w-[1280px] h-[720px] overflow-hidden flex flex-col bg-white font-['Noto_Sans',sans-serif]">
      <TitleArea />
      <Ribbon />
      <FormulaBar />
      <Sheet />
      <SheetTabs />
      <StatusBar />
      <CondMenu />
      <IconSetsMenu />
      <Watermark />
    </div>
  )
}
